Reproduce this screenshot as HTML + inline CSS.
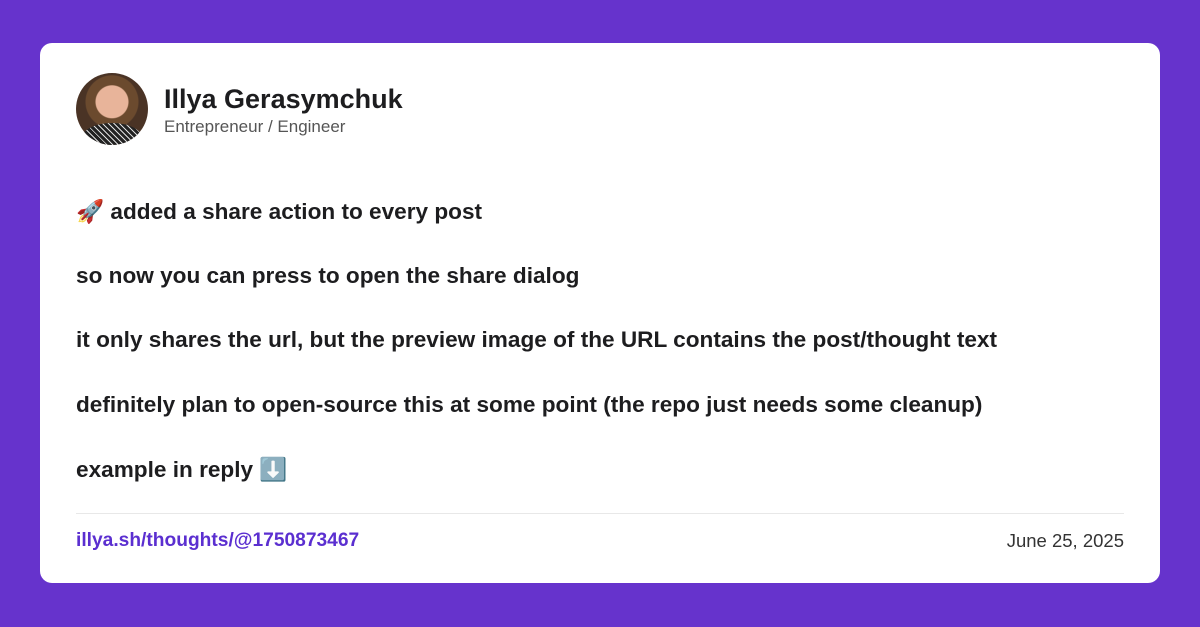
<!DOCTYPE html>
<html><head><meta charset="utf-8"><style>
*{margin:0;padding:0;box-sizing:border-box}
body{width:1200px;height:627px;background:#6633cc;font-family:"Liberation Sans",sans-serif;position:relative;overflow:hidden}
.card{position:absolute;left:40px;top:43px;width:1120px;height:540px;background:#fff;border-radius:12px}
.av{position:absolute;left:36px;top:30px;width:72px;height:72px;border-radius:50%;background:radial-gradient(circle at 50% 40%,#e8b49a 0 16px,#6b4a2e 17px 26px,#4a3325 27px);overflow:hidden}
.av:after{content:"";position:absolute;left:6px;right:6px;bottom:-8px;height:30px;border-radius:50% 50% 0 0;background:repeating-linear-gradient(45deg,#222 0 3px,#ddd 3px 4px)}
.name{position:absolute;left:124px;top:41px;font-size:27px;font-weight:bold;color:#1d1d1f}
.sub{position:absolute;left:124px;top:74px;font-size:17px;color:#555}
.p{position:absolute;left:36px;font-size:22.6px;font-weight:bold;color:#1d1d1f;white-space:nowrap}
.hr{position:absolute;left:36px;right:36px;top:470px;height:1px;background:#e8e8e8}
.link{position:absolute;left:36px;top:487px;font-size:19.2px;font-weight:bold;color:#5b2fd0}
.date{position:absolute;right:36px;top:487px;font-size:18.5px;color:#333}
</style></head><body>
<div class="card">
<div class="av"></div>
<div class="name">Illya Gerasymchuk</div>
<div class="sub">Entrepreneur / Engineer</div>
<div class="p" style="top:155px">🚀 added a share action to every post</div>
<div class="p" style="top:220px">so now you can press to open the share dialog</div>
<div class="p" style="top:284px">it only shares the url, but the preview image of the URL contains the post/thought text</div>
<div class="p" style="top:349px">definitely plan to open-source this at some point (the repo just needs some cleanup)</div>
<div class="p" style="top:413px">example in reply ⬇️</div>
<div class="hr"></div>
<div class="link">illya.sh/thoughts/@1750873467</div>
<div class="date">June 25, 2025</div>
</div>
</body></html>
